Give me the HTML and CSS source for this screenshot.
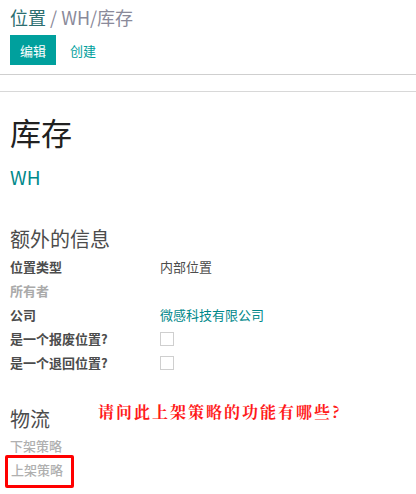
FILE: index.html
```html
<!DOCTYPE html>
<html>
<head>
<meta charset="utf-8">
<link rel="stylesheet" href="styles.css">
</head>
<body>
<div class="control">
  <div class="breadcrumb"><span class="crumb-link">位置</span><span class="crumb-sep"> / </span><span class="crumb-cur">WH/库存</span></div>
  <div class="buttons">
    <button class="btn-primary">编辑</button>
    <button class="btn-link">创建</button>
  </div>
</div>
<div class="rule"></div>
<div class="sheet">
  <h1 class="title">库存</h1>
  <div class="subtitle">WH</div>
  <h2 class="group-title info">额外的信息</h2>
  <div class="fields">
    <div class="label">位置类型</div><div class="value">内部位置</div>
    <div class="label muted">所有者</div><div class="value"></div>
    <div class="label">公司</div><div class="value link">微感科技有限公司</div>
    <div class="label">是一个报废位置?</div><div class="value"><span class="checkbox"></span></div>
    <div class="label">是一个退回位置?</div><div class="value"><span class="checkbox"></span></div>
  </div>
  <div class="logistics">
    <h2 class="group-title">物流</h2>
    <div class="note">请问此上架策略的功能有哪些?</div>
  </div>
  <div class="label muted plain">下架策略</div>
  <div class="label muted plain boxed">上架策略</div>
</div>
</body>
</html>
```
FILE: styles.css
```css
* { box-sizing: border-box; }
body {
  margin: 0;
  font-family: "Noto Sans CJK SC", "Noto Sans", sans-serif;
  color: #4c4c4c;
  background: #fff;
  font-size: 13px;
}
.control { padding: 4px 10px 0 10px; height: 75px; border-bottom: 1px solid #cfcfcf; }
.breadcrumb { font-size: 18px; line-height: 26px; height: 28px; }
.crumb-link { color: #2c6e70; }
.crumb-sep, .crumb-cur { color: #8a8a9a; }
.buttons { display: flex; align-items: center; margin-top: 3px; gap: 4px; }
.btn-primary {
  background: #00a09d; color: #fff; border: none;
  width: 46px; height: 30px; font-family: inherit; font-size: 13px; padding: 0;
}
.btn-link {
  background: none; border: none; color: #00a09d;
  font-family: inherit; font-size: 13px; padding: 0 10px;
}
.rule { height: 17px; border-bottom: 1px solid #d8d8d8; }
.sheet { padding: 0 10px; }
.title { font-size: 31px; font-weight: 400; margin: 0; padding-top: 18px; line-height: 44px; color: #212121; }
.subtitle { font-size: 19px; color: #00888a; margin-top: 11px; line-height: 24px; }
.group-title { font-size: 20px; font-weight: 400; margin: 0; line-height: 28px; color: #4c4c4c; }
.info { margin-top: 36px; }
.fields { display: grid; grid-template-columns: 150px 1fr; margin-top: 2px; }
.label { font-weight: 700; line-height: 24px; height: 24px; color: #4c4c4c; }
.value { line-height: 24px; height: 24px; display: flex; align-items: center; }
.label.muted { color: #aaaaaa; }
.label.plain { font-weight: 500; color: #b0b0b0; }
.link { color: #00888a; }
.checkbox { width: 14px; height: 14px; border: 1px solid #cfcfcf; display: inline-block; }
.logistics { display: flex; align-items: flex-start; margin-top: 30px; gap: 48px; }
.note {
  color: #ff1a1a; font-weight: 700; font-size: 16px; letter-spacing: 2px;
  font-family: "Noto Serif CJK SC", "Noto Sans CJK SC", serif;
  line-height: 22px; margin-top: -4px;
}
.logistics + .plain { margin-top: 1px; }
.boxed {
  display: inline-block; margin-left: -5px; margin-top: -3px; padding: 1px 8px 4px 3px;
  border: 3px solid #ff0000; border-radius: 2px; height: 33px; line-height: 22px;
}
```
